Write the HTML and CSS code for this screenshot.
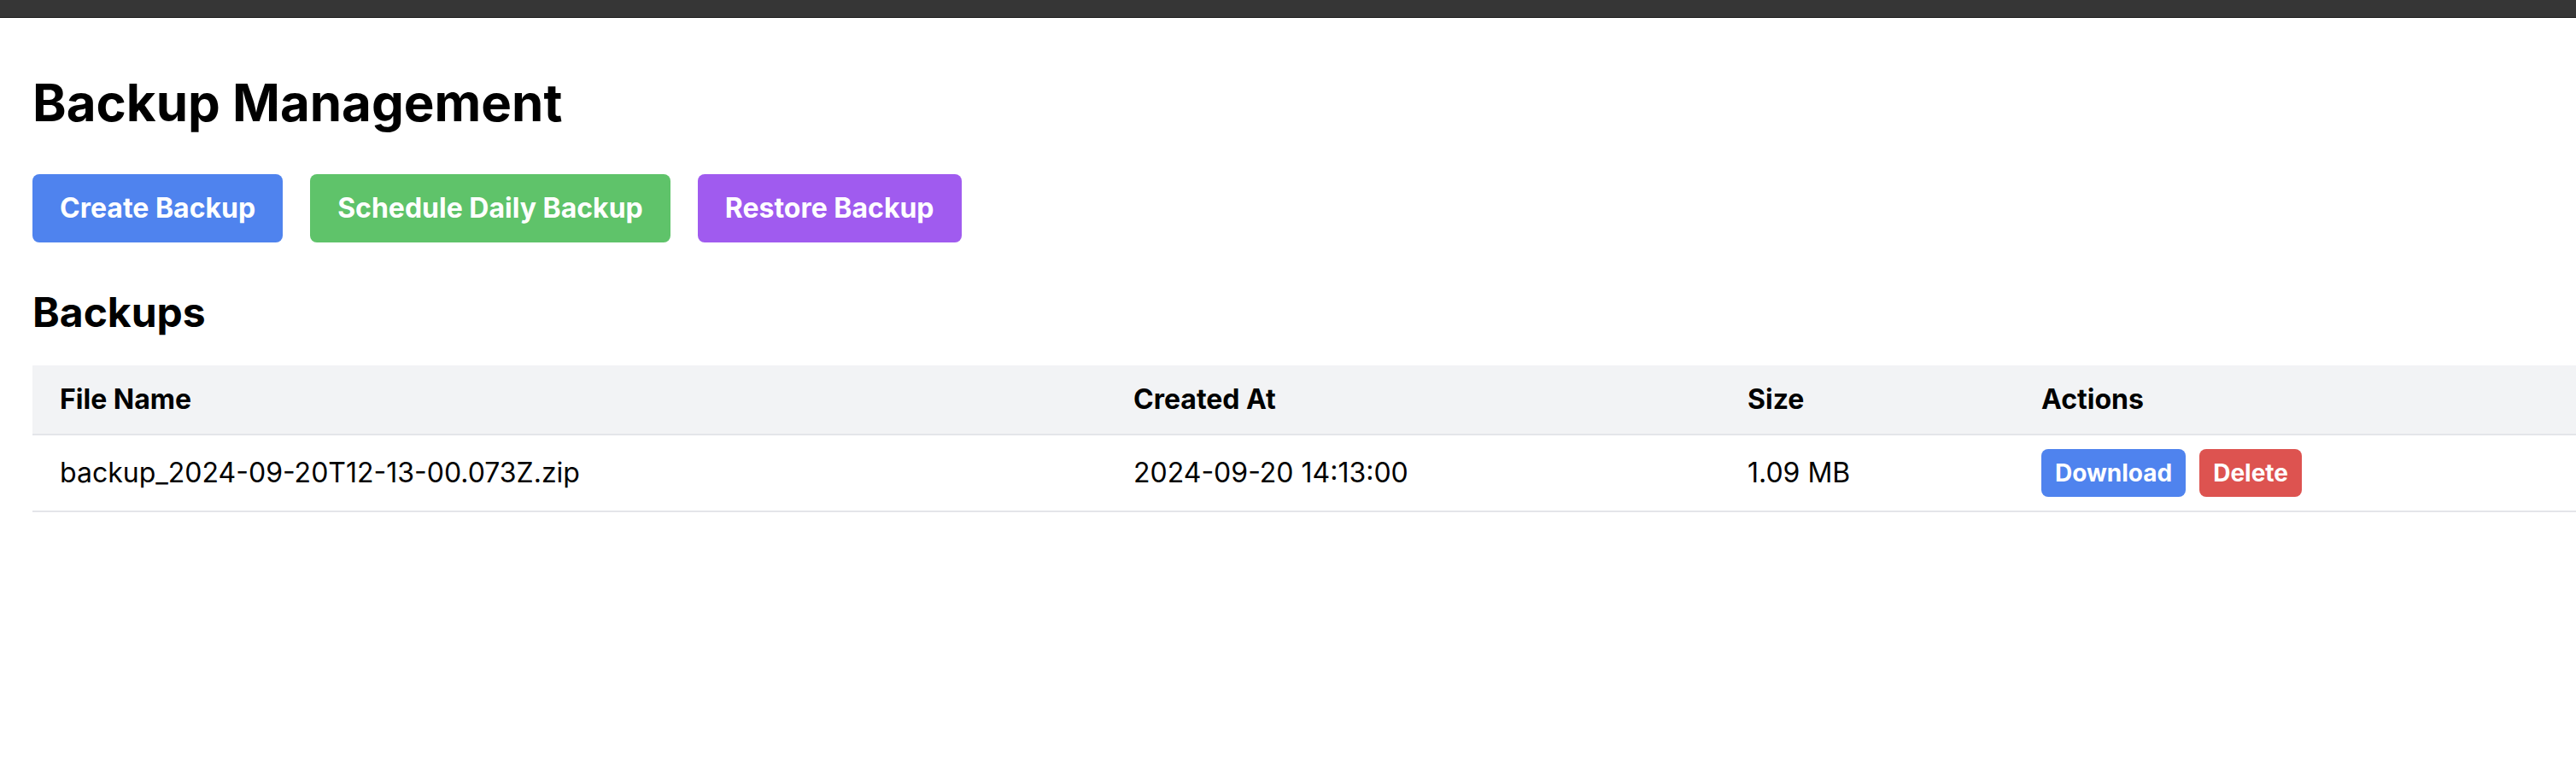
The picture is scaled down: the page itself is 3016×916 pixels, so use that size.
FILE: index.html
```html
<!DOCTYPE html>
<html lang="en">
<head>
<meta charset="utf-8">
<title>Backup Management</title>
<link rel="stylesheet" href="styles.css">
</head>
<body>
<div class="topbar"></div>
<main class="page">
  <h1 class="title">Backup Management</h1>
  <div class="toolbar">
    <button class="btn btn-blue">Create Backup</button>
    <button class="btn btn-green">Schedule Daily Backup</button>
    <button class="btn btn-purple">Restore Backup</button>
  </div>
  <h2 class="subtitle">Backups</h2>
  <table class="table">
    <colgroup>
      <col class="col-name">
      <col class="col-created">
      <col class="col-size">
      <col class="col-actions">
    </colgroup>
    <thead>
      <tr>
        <th>File Name</th>
        <th>Created At</th>
        <th>Size</th>
        <th>Actions</th>
      </tr>
    </thead>
    <tbody>
      <tr>
        <td>backup_2024-09-20T12-13-00.073Z.zip</td>
        <td>2024-09-20 14:13:00</td>
        <td>1.09 MB</td>
        <td>
          <div class="actions">
            <button class="sbtn btn-blue">Download</button>
            <button class="sbtn btn-red">Delete</button>
          </div>
        </td>
      </tr>
    </tbody>
  </table>
</main>
</body>
</html>
```
FILE: styles.css
```css
* { box-sizing: border-box; }
html, body { margin: 0; padding: 0; background: #ffffff; }
body {
  font-family: Inter, "Noto Sans", "Liberation Sans", sans-serif;
  color: #000;
  overflow: hidden;
}
.topbar {
  height: 21px;
  background: #363636;
  border-bottom: 1px solid #1c1c1c;
}
.page {
  padding: 63px 0 0 38px;
}
.title {
  margin: 0 0 48px 0;
  font-size: 60px;
  line-height: 72px;
  font-weight: 700;
}
.toolbar {
  display: flex;
  gap: 32px;
}
.btn {
  border: 0;
  border-radius: 8px;
  padding: 16px 32px;
  font-family: inherit;
  font-size: 32px;
  line-height: 48px;
  font-weight: 700;
  color: #fff;
}
.btn-blue { background: #4f83ee; }
.btn-green { background: #5fc36a; }
.btn-purple { background: #a05bef; }
.btn-red { background: #dd5350; }
.subtitle {
  margin: 50px 0 30px 0;
  font-size: 48px;
  line-height: 64px;
  font-weight: 700;
}
.table {
  width: 2978px;
  table-layout: fixed;
  border-collapse: collapse;
}
.col-name { width: 1257px; }
.col-created { width: 719px; }
.col-size { width: 344px; }
.table thead tr { background: #f2f3f5; }
.table th {
  text-align: left;
  font-weight: 700;
  font-size: 32px;
  line-height: 48px;
  padding: 16px 32px;
  border-bottom: 2px solid #e4e5e9;
}
.table td {
  font-size: 32px;
  line-height: 56px;
  padding: 16px 32px;
  border-bottom: 2px solid #e4e5e9;
  white-space: nowrap;
}
.actions {
  display: flex;
  gap: 16px;
}
.sbtn {
  border: 0;
  border-radius: 8px;
  padding: 8px 16px;
  font-family: inherit;
  font-size: 28px;
  line-height: 40px;
  font-weight: 700;
  color: #fff;
}
```
